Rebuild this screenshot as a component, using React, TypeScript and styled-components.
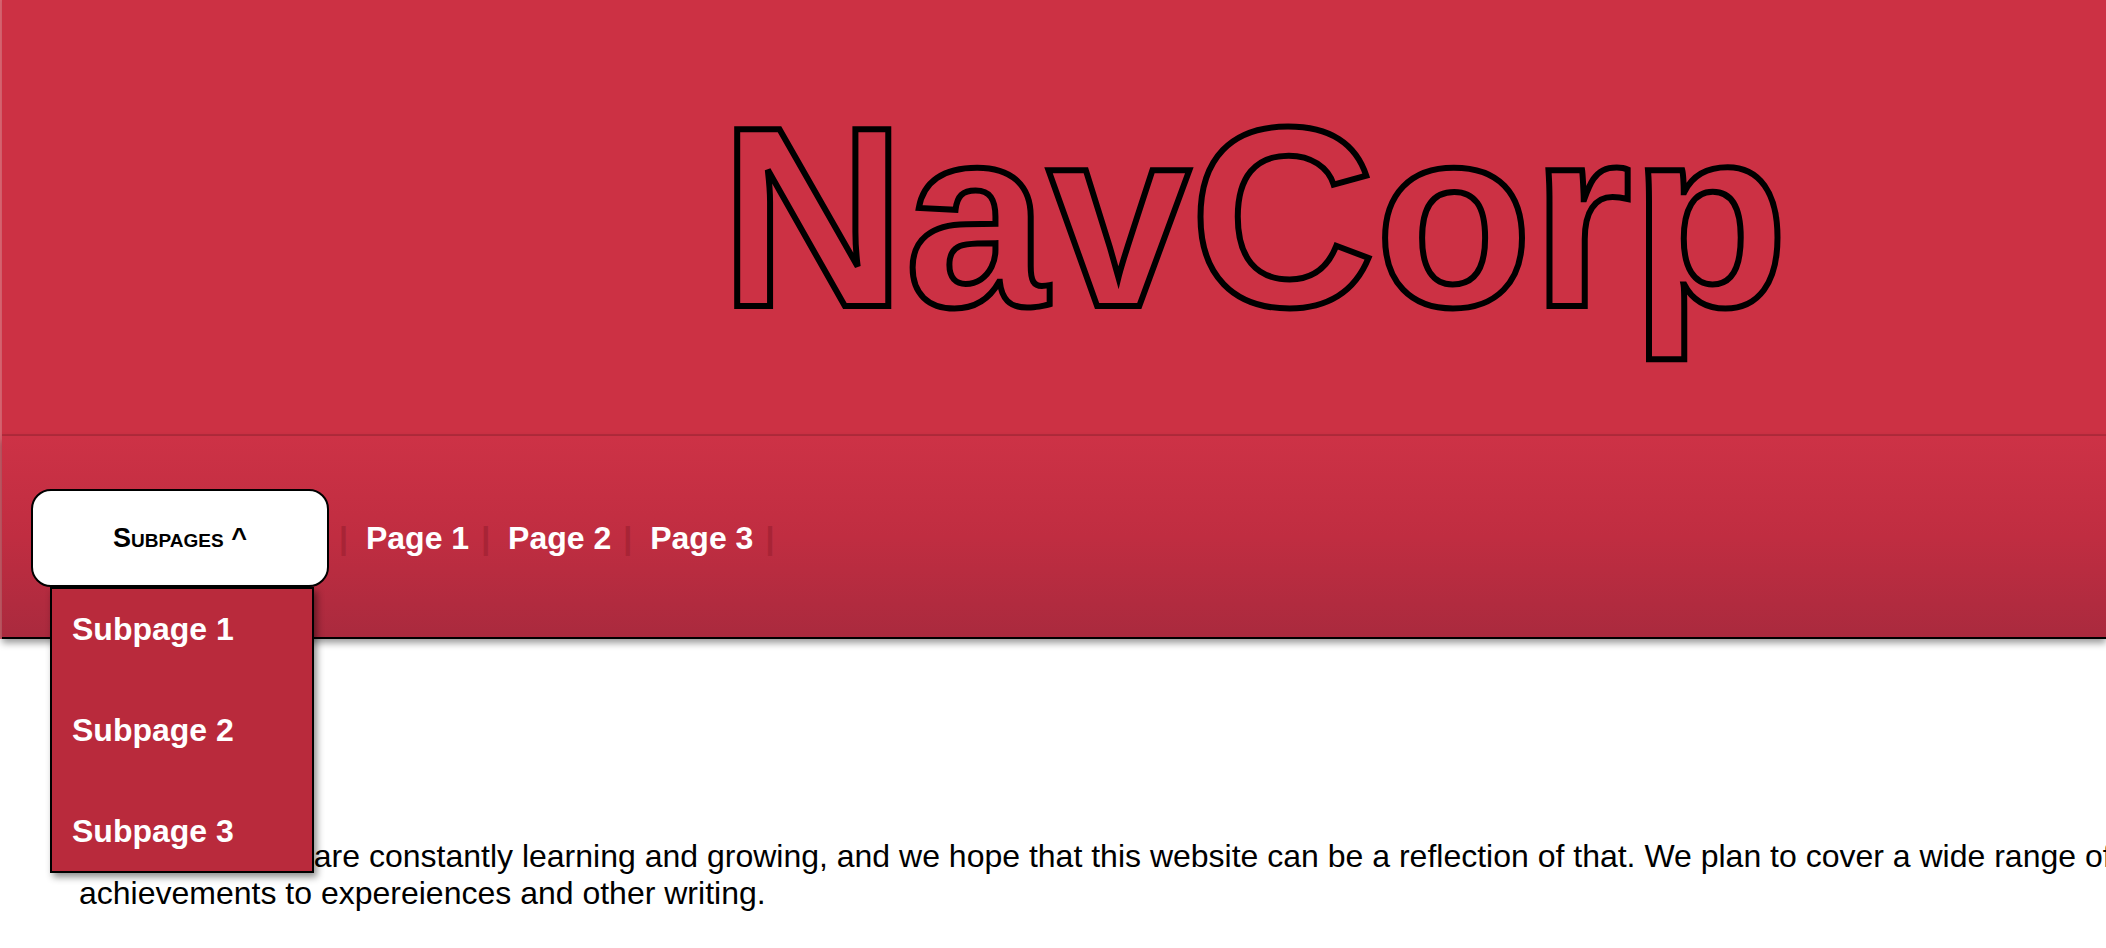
import React from "react";
import styled, { createGlobalStyle } from "styled-components";

const GlobalStyle = createGlobalStyle`
  html, body {
    margin: 0;
    padding: 0;
    overflow: hidden;
    background: #ffffff;
  }
  body {
    font-family: "Liberation Sans", Arial, sans-serif;
    color: #000000;
  }
`;

const Page = styled.div`
  width: 2106px;
  min-height: 948px;
  display: flex;
  flex-direction: column;
`;

const Header = styled.header`
  position: relative;
  z-index: 2;
  display: flex;
  flex-direction: column;
  border-left: 2px solid #d8626f;
`;

const Banner = styled.div`
  height: 436px;
  box-sizing: border-box;
  padding: 88px 0 0 718px;
  background: #cc3144;
  border-bottom: 2px solid #b42b3c;
  box-shadow: 0 1px 2px rgba(0, 0, 0, 0.12);
`;

const Title = styled.h1`
  margin: 0;
  font-family: "Liberation Sans", Arial, sans-serif;
  font-weight: 700;
  font-size: 257px;
  line-height: 1;
  letter-spacing: -0.5px;
  color: transparent;
  -webkit-text-stroke: 6px #000000;
  white-space: nowrap;
`;

const NavBar = styled.nav`
  height: 203px;
  box-sizing: border-box;
  padding: 3px 0 0 29px;
  display: flex;
  align-items: center;
  background: linear-gradient(to bottom, #cd3246 0%, #c02d41 50%, #aa2a3e 100%);
  border-bottom: 2px solid #000000;
  box-shadow: 0 4px 7px rgba(0, 0, 0, 0.4);
`;

const DropdownWrap = styled.div`
  position: relative;
  display: flex;
`;

const MenuButton = styled.button`
  width: 298px;
  height: 98px;
  box-sizing: border-box;
  background: #ffffff;
  border: 2px solid #000000;
  border-radius: 20px;
  font-family: "Liberation Sans", Arial, sans-serif;
  font-weight: 700;
  font-size: 27px;
  font-variant: small-caps;
  color: #000000;
  cursor: pointer;
  padding: 0;
`;

const Menu = styled.ul`
  position: absolute;
  left: 19px;
  top: 98px;
  width: 264px;
  height: 286px;
  box-sizing: border-box;
  margin: 0;
  padding: 2px 0 0;
  list-style: none;
  display: flex;
  flex-direction: column;
  gap: 25px;
  background: #b92a3c;
  border: 2px solid #000000;
  box-shadow: 3px 4px 7px rgba(0, 0, 0, 0.45);
  z-index: 5;
`;

const MenuItem = styled.li`
  height: 76px;
  display: flex;
  align-items: center;
  padding-left: 20px;
  font-weight: 700;
  font-size: 32px;
  color: #ffffff;
`;

const Sep = styled.span`
  font-weight: 700;
  font-size: 32px;
  color: #a82436;
  margin: 0 18px 0 12px;
  &:first-of-type {
    margin-left: 10px;
  }
`;

const NavLink = styled.a`
  font-weight: 700;
  font-size: 32px;
  color: #ffffff;
  text-decoration: none;
`;

const Main = styled.main`
  position: relative;
  z-index: 1;
  padding: 199px 0 0 79px;
`;

const Paragraph = styled.p`
  margin: 0;
  font-size: 32px;
  white-space: nowrap;
`;

const pages = ["Page 1", "Page 2", "Page 3"];
const subpages = ["Subpage 1", "Subpage 2", "Subpage 3"];

export default function App() {
  return (
    <>
      <GlobalStyle />
      <Page>
        <Header>
          <Banner>
            <Title>NavCorp</Title>
          </Banner>
          <NavBar>
            <DropdownWrap>
              <MenuButton>Subpages ^</MenuButton>
              <Menu>
                {subpages.map((s) => (
                  <MenuItem key={s}>{s}</MenuItem>
                ))}
              </Menu>
            </DropdownWrap>
            {pages.map((p) => (
              <React.Fragment key={p}>
                <Sep>|</Sep>
                <NavLink href="#">{p}</NavLink>
              </React.Fragment>
            ))}
            <Sep>|</Sep>
          </NavBar>
        </Header>
        <Main>
          <Paragraph>
            As students, we are constantly learning and growing, and we hope that this website can be a
            reflection of that. We plan to cover a wide range of topics, from academic
            <br />
            achievements to expereiences and other writing.
          </Paragraph>
        </Main>
      </Page>
    </>
  );
}
